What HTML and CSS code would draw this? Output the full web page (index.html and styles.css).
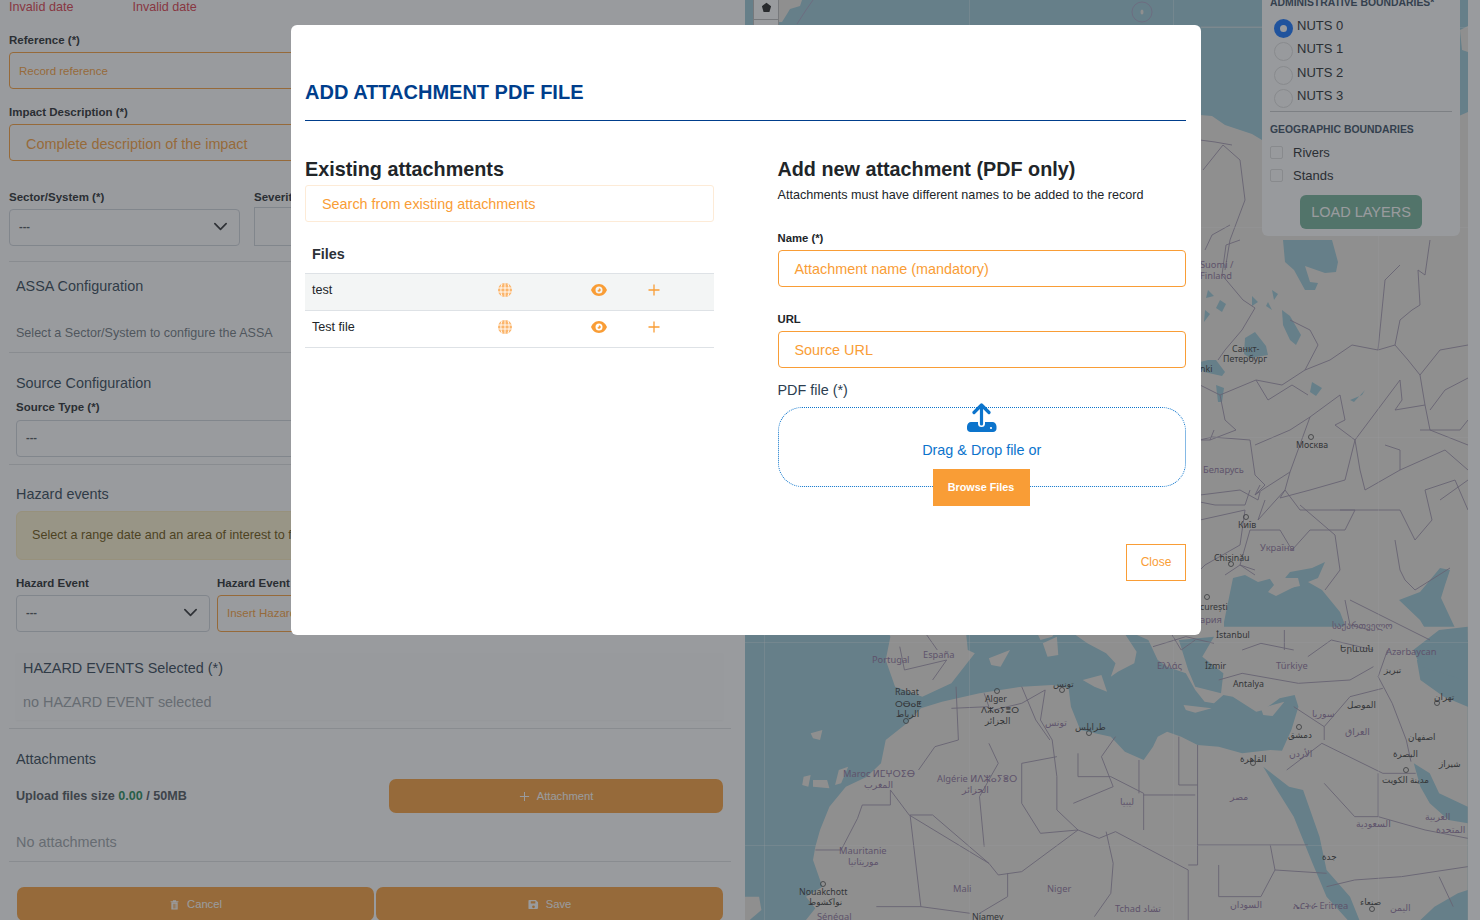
FILE: index.html
```html
<!DOCTYPE html>
<html lang="en">
<head>
<meta charset="utf-8">
<title>Add attachment</title>
<link rel="stylesheet" href="styles.css">
</head>
<body>
<div class="page">
  <main class="form">
    <div class="dates"><span class="invalid">Invalid date</span><span class="invalid">Invalid date</span></div>
    <label class="lbl lbl-ref">Reference (*)</label>
    <div class="inp inp-orange ph-small">Record reference</div>
    <label class="lbl lbl-imp">Impact Description (*)</label>
    <div class="inp inp-orange ph-large">Complete description of the impact</div>
    <div class="sector-row">
      <div class="sector-col">
        <label class="lbl">Sector/System (*)</label>
        <div class="inp inp-gray sel">--- <svg class="chev" viewBox="0 0 16 16"><path d="M2 5l6 6 6-6" fill="none" stroke="#2b2d30" stroke-width="1.8" stroke-linecap="round" stroke-linejoin="round"/></svg></div>
      </div>
      <div class="sev-col">
        <label class="lbl">Severity (*)</label>
        <div class="inp inp-plain"></div>
      </div>
    </div>
    <hr class="rule rule-a">
    <div class="section">
      <h3 class="sec-title st-assa">ASSA Configuration</h3>
      <p class="muted-line">Select a Sector/System to configure the ASSA</p>
    </div>
    <hr class="rule rule-b">
    <div class="section">
      <h3 class="sec-title st-source">Source Configuration</h3>
      <label class="lbl lbl-src">Source Type (*)</label>
      <div class="inp inp-gray sel src-sel">---</div>
    </div>
    <hr class="rule rule-c">
    <div class="section">
      <h3 class="sec-title st-haz">Hazard events</h3>
      <div class="alert">Select a range date and an area of interest to filter hazard events</div>
      <div class="haz-row">
        <div class="haz-a"><label class="lbl">Hazard Event</label>
          <div class="inp inp-gray sel">--- <svg class="chev" viewBox="0 0 16 16"><path d="M2 5l6 6 6-6" fill="none" stroke="#2b2d30" stroke-width="1.8" stroke-linecap="round" stroke-linejoin="round"/></svg></div></div>
        <div class="haz-b"><label class="lbl">Hazard Event Name</label>
          <div class="inp inp-orange ph-small ph-haz">Insert Hazard Event</div></div>
      </div>
      <div class="haz-card">
        <div class="haz-card-title">HAZARD EVENTS Selected (*)</div>
        <div class="haz-card-none">no HAZARD EVENT selected</div>
      </div>
    </div>
    <hr class="rule rule-d">
    <div class="section">
      <h3 class="sec-title st-att">Attachments</h3>
      <div class="att-row">
        <div class="upload">Upload files size <span class="ok">0.00</span> / 50MB</div>
        <div class="btn btn-att"><svg class="bi" viewBox="0 0 12 12"><path d="M6 1v10M1 6h10" stroke="currentColor" stroke-width="1.1" fill="none"/></svg>Attachment</div>
      </div>
      <p class="none-att">No attachments</p>
    </div>
    <hr class="rule rule-e">
    <div class="actions">
      <div class="btn btn-cancel"><svg class="bi" viewBox="0 0 12 14"><path d="M1 3h10v1H1zM4 1.500h4V3H4zM2 4.500h8V13.500H2z M4 6v6h.8V6zM5.700 6v6h.8V6zM7.400 6v6h.8V6z" fill="currentColor" fill-rule="evenodd"/></svg>Cancel</div>
      <div class="btn btn-save"><svg class="bi" viewBox="0 0 12 12"><path d="M1.500 1h7L11 3.500v6A1.500 1.500 0 0 1 9.500 11h-8A1 1 0 0 1 .5 10V2a1 1 0 0 1 1-1zM3 2.500v2.500h5V2.500zM6 7a1.500 1.500 0 1 0 0 3 1.500 1.500 0 0 0 0-3z" fill="currentColor" fill-rule="evenodd"/></svg>Save</div>
    </div>
  </main>

  <section class="map">
    <svg class="map-svg" viewBox="0 0 723 920">
      <rect width="723" height="920" fill="#98c6d4"/>
      <!-- northern land -->
      <g transform="translate(-745 0)">
        <path fill="#ebe7e0" d="M1200 115 L1212 116 L1225 125 L1252 134 L1262 140 L1290 142 L1320 128 L1336 118 L1352 140 L1362 165 L1385 175 L1400 150 L1420 128 L1445 122 L1468 112 L1468 660 L1200 660Z"/>
        <path fill="#ebe7e0" d="M778 0H802L800 6L790 9L787 14L782 22H778Z"/>
        <path fill="#ebe7e0" d="M1460 30L1468 26V52L1462 50Z"/>
        <ellipse cx="1142" cy="12" rx="1.500" ry="2.500" fill="#ebe7e0"/>
        <circle cx="1142" cy="12" r="10" fill="none" stroke="#a6a3c4" stroke-width="1"/>
        <path d="M813 0L806 10L797 24" fill="none" stroke="#a6a3c4" stroke-width="1"/>
        <path d="M1201 27H1262" stroke="#cfd8da" stroke-width=".8"/>
        <!-- lakes and inland water, Russia -->
        <g fill="#98c6d4">
          <path d="M1283 240L1332 240L1338 262L1336 272L1325 273L1305 266L1310 282L1318 283L1315 290L1305 290L1294 270L1285 262Z"/>
          <path d="M1245 338L1255 332L1266 346L1268 355L1250 358L1244 354Z"/>
          <path d="M1282 310L1290 316L1301 335L1296 345L1290 340L1283 325Z"/>
          <path d="M1208 360L1216 360L1225 372L1222 376L1204 372L1200 368L1200 362Z"/>
          <path d="M1216 385L1224 388L1222 402L1218 402Z"/>
          <path d="M1312 382L1322 388L1316 396L1310 392Z"/>
          <path d="M1220 300L1226 304L1222 312L1216 308ZM1205 310L1210 314L1204 322ZM1208 290L1214 296L1206 298ZM1272 290L1278 294L1274 300ZM1268 302L1272 310L1266 306ZM1252 296L1258 302L1252 306Z"/>
          <path d="M1350 400L1362 395L1365 390L1354 402Z"/>
        </g>
        <!-- Black sea + Azov -->
        <path fill="#98c6d4" d="M1224 660 L1224 622 L1233 578 L1245 575 L1258 582 L1273 578 L1280 590 L1300 586 L1298 578 L1285 578 L1290 572 L1312 568 L1325 562 L1318 578 L1308 582 L1322 590 L1340 612 L1345 625 L1328 640 L1290 642 L1265 655 L1262 660Z"/>
        <path fill="#ebe7e0" d="M1268 576 L1278 572 L1296 586 L1276 596 L1268 592 L1274 585Z"/>
        <!-- Caspian -->
        <path fill="#98c6d4" d="M1399 600 L1420 592 L1440 568 L1450 570 L1445 585 L1441 598 L1456 630 L1468 650 L1468 660 L1440 660 L1432 640 L1420 620Z"/>
        <path fill="#98c6d4" d="M1450 648L1468 632V660H1450Z"/>
      </g>
      <!-- south basemap, coordinates follow a 2.133×3 projection -->
      <g transform="translate(0 630) scale(.469 .3333)">
        <path fill="#ebe7e0" d="M300 -10 H1541 V30 L1490 40 L1430 70 L1440 150 L1490 200 L1541 230 L1541 870 H130 L150 835 L130 800 L165 770 L145 690 L150 650 L160 600 L180 530 L215 470 L260 440 L290 400 L300 330 L345 280 L375 235 L420 215 L500 190 L590 170 L655 165 L690 175 L695 230 L715 300 L780 320 L810 365 L850 390 L870 350 L880 320 L900 305 L930 320 L965 345 L1010 350 L1060 370 L1120 360 L1145 362 L1165 300 L1180 230 L1172 195 L1140 205 L1105 240 L1090 245 L1040 200 L1020 195 L1000 220 L980 215 L960 180 L940 130 L900 110 L880 90 L860 30 L820 5 L790 -10 Z"/>
        <path fill="#ebe7e0" d="M300 -10 H470 L475 60 L490 70 L440 160 L378 200 L320 170 L300 90 L310 20Z"/>
        <path fill="#ebe7e0" d="M560 -10 H800 L835 65 L830 100 L795 125 L780 140 L790 100 L770 70 L730 40 L680 -10 Z"/>
        <g fill="#98c6d4">
          <path d="M925 30L1000 20L975 80L1020 130L1015 190L960 170L945 120Z"/>
          <path d="M1160 470L1190 480L1225 620L1240 720L1290 800L1310 870H1285L1240 800L1210 700L1170 560L1130 470L1105 410Z"/>
          <path d="M1426 400L1460 430L1480 490L1541 530V580L1500 570L1460 520L1440 470Z"/>
          <path d="M1480 0L1541 -10V90L1530 150L1490 130L1440 110L1425 60Z"/>
          <path d="M1520 790L1541 780V870H1440L1470 830Z"/>
        </g>
        <g fill="#ebe7e0">
          <path d="M635 40L665 20L668 75L645 80Z"/>
          <path d="M620 0H665L655 20L630 30Z"/>
          <path d="M720 150L760 135L772 185L745 170Z"/>
          <path d="M1100 235L1150 215L1125 258L1105 255Z"/>
          <path d="M935 225L995 235L960 248L940 240Z"/>
          <path d="M520 85L565 60L545 110L525 105Z"/>
          <path d="M0 800H30L35 840L10 870H0Z"/>
          <path d="M140 310L165 300L160 330L145 325Z"/>
          <path d="M125 440L140 435L135 470L122 465Z"/>
          <path d="M145 450L175 450L180 475L145 470Z"/>
          <path d="M200 420L220 410L205 460L192 465Z"/>
        </g>
        <!-- boundaries -->
        <g class="bd" fill="none" stroke="#9b8fa8">
          <path d="M310 480L350 555L350 555L520 700L540 735L590 725L710 600L755 625L790 605L945 720L945 870"/>
          <path d="M310 480V525H250L240 565L205 660H150"/>
          <path d="M352 555H400L520 700M352 555L375 830H280"/>
          <path d="M655 330L665 440L665 540L710 600M655 330L630 270L640 180"/>
          <path d="M965 345V705H945M965 645H1200"/>
          <path d="M770 605L785 700L780 790L745 860M560 730V800L500 850M375 830L480 850"/>
          <path d="M1155 420L1230 340L1360 430L1430 430M1170 230L1235 290L1235 330M1235 290L1290 200L1360 175"/>
          <path d="M1370 60L1350 140L1380 220L1410 330L1420 395"/>
          <path d="M1010 150L1060 130L1180 160L1290 150L1340 110M1060 60L1100 40L1170 60M870 50L940 20L1000 40"/>
          <path d="M450 170L455 330L405 350L370 420M590 170L620 270L650 330M520 340L540 400L500 500L510 650M590 400L665 380M590 400L590 520L630 610L710 600"/>
          <path d="M710 370V440L780 440L850 490V600M850 495H960M790 320L760 380L785 470L700 520M840 390V490M925 320V465H965"/>
          <path d="M1120 645L1130 720L1240 730M1010 705V800H1100L1130 720M1541 710L1400 740L1300 750L1240 770M1480 740L1510 830"/>
          <path d="M1350 430L1350 560M1235 460L1300 560L1350 560L1450 600L1541 625"/>
          <path d="M330 50L340 120L430 90L400 150M380 0L410 60M900 -10L930 60L960 30M1150 0L1150 60M1200 80L1250 30L1340 60"/>
          <path d="M510 190L520 230L440 235M640 180L590 220L530 240"/>
        </g>
      </g>
      <g transform="translate(-745 0)" fill="none" stroke="#9b8fa8" stroke-width=".9">
        <path d="M1222 275L1243 300L1255 308L1242 330L1225 350L1218 360M1222 275L1226 245L1240 240"/>
        <path d="M1200 385L1220 395L1225 420L1236 430L1210 440L1200 440"/>
        <path d="M1220 395L1256 380L1282 385L1305 370L1318 345L1310 330L1290 320"/>
        <path d="M1256 380L1268 400L1292 385L1308 395M1305 370L1330 360L1352 345L1378 350L1395 345L1408 360L1420 375L1425 405"/>
        <path d="M1395 345L1400 320L1412 310L1420 305L1418 270L1425 275L1430 240M1378 350L1385 280L1400 265"/>
        <path d="M1420 375L1440 350L1468 345M1430 410L1445 390L1468 378"/>
        <path d="M1255 445L1290 430L1310 417L1340 395L1345 420L1335 425L1355 440L1400 380L1402 400L1395 410"/>
        <path d="M1200 440L1212 437L1250 440L1255 475L1265 485L1255 495L1262 490L1290 472L1310 417M1290 472L1285 490L1280 498L1310 490L1345 480L1355 440L1360 470L1365 490L1400 470L1400 450L1385 445"/>
        <path d="M1210 440L1214 430M1255 495L1260 485M1265 500L1258 520L1285 490L1300 510L1340 510L1355 510L1345 530L1310 530L1292 550L1280 530L1250 530"/>
        <path d="M1200 495L1240 490L1258 500L1260 492M1200 502L1215 505L1245 505L1250 490M1200 520L1245 510L1240 545L1205 565L1200 570M1300 505L1335 535L1340 570L1325 590"/>
        <path d="M1340 510L1400 510L1410 530L1415 540L1432 520L1425 490L1455 480L1468 510M1400 470L1445 450L1468 470M1420 430L1460 430L1468 420"/>
        <path d="M1395 410L1425 405L1430 430L1468 445M1468 480L1440 500"/>
        <path d="M1395 540L1400 570L1405 580L1415 590L1450 568M1350 600L1400 625L1430 640M1345 600L1350 625L1370 630M1225 575L1240 565L1255 570M1250 530L1240 565L1255 575"/>
        <path d="M1205 250L1212 235L1230 225M1203 170L1223 145L1240 160L1245 200L1230 240L1225 270M1200 140L1215 142L1232 145"/>
      </g>
      <!-- graticule -->
      <g stroke="#fff" stroke-opacity=".28" stroke-width="1">
        <path d="M19.500 0V920M224.500 0V920M428.500 0V920M633.500 0V920M0 27.500H723M0 227.500H723M0 437.500H723M0 642.500H723M0 845.500H723"/>
      </g>
      <!-- labels -->
      <g class="ml" transform="translate(-745 0)">
        <text x="1200" y="268" class="mc">Suomi /</text><text x="1200" y="279" class="mc">Finland</text>
        <text x="1232" y="352" class="md">Санкт-</text><text x="1223" y="362" class="md">Петербург</text>
        <text x="1200" y="372" class="md">nki</text>
        <text x="1296" y="448" class="md">Москва</text>
        <text x="1203" y="473" class="mc">Беларусь</text>
        <text x="1238" y="528" class="md">Київ</text>
        <text x="1260" y="551" class="mc">Україна</text>
        <text x="1214" y="561" class="md">Chișinău</text>
        <text x="1200" y="610" class="md">curești</text>
        <text x="1200" y="623" class="mc">ария</text>
        <text x="1216" y="638" class="md">İstanbul</text>
        <text x="1332" y="629" class="mc">საქართველო</text>
        <text x="872" y="663" class="mc">Portugal</text><text x="923" y="658" class="mc">España</text>
        <text x="895" y="695" class="md">Rabat</text><text x="895" y="707" class="md">ⵔⴱⴰⵟ</text><text x="896" y="717" class="md">الرباط</text>
        <text x="985" y="702" class="md">Alger</text><text x="981" y="713" class="md">ⴷⵣⴰⵢⴻⵔ</text><text x="985" y="724" class="md">الجزائر</text>
        <text x="1053" y="687" class="md">تونس</text><text x="1045" y="726" class="mc">تونس</text><text x="1075" y="730" class="md">طرابلس</text>
        <text x="1157" y="669" class="mc">Ελλάς</text><text x="1205" y="669" class="md">İzmir</text>
        <text x="1276" y="669" class="mc">Türkiye</text><text x="1233" y="687" class="md">Antalya</text>
        <text x="1340" y="652" class="md">Երևան</text><text x="1386" y="655" class="mc">Azərbaycan</text><text x="1384" y="673" class="md">تبریز</text>
        <text x="1347" y="708" class="md">الموصل</text><text x="1312" y="717" class="mc">سوريا</text><text x="1434" y="700" class="md">تهران</text>
        <text x="1345" y="735" class="mc">العراق</text><text x="1408" y="740" class="md">اصفهان</text><text x="1288" y="738" class="md">دمشق</text>
        <text x="1289" y="757" class="mc">الأردن</text><text x="1240" y="762" class="md">القاهرة</text><text x="1393" y="757" class="md">البصرة</text><text x="1439" y="767" class="md">شيراز</text>
        <text x="843" y="777" class="mc">Maroc ⵍⵎⵖⵔⵉⴱ</text><text x="864" y="788" class="mc">المغرب</text>
        <text x="937" y="782" class="mc">Algérie ⵍⴷⵣⴰⵢⴻⵔ</text><text x="962" y="793" class="mc">الجزائر</text>
        <text x="1120" y="805" class="mc">ليبيا</text><text x="1230" y="800" class="mc">مصر</text><text x="1382" y="783" class="md">مدينة الكويت</text>
        <text x="1356" y="827" class="mc">السعودية</text><text x="1425" y="820" class="mc">العربية</text><text x="1436" y="833" class="mc">المتحدة</text>
        <text x="839" y="854" class="mc">Mauritanie</text><text x="848" y="865" class="mc">موريتانيا</text>
        <text x="1322" y="860" class="md">جدة</text>
        <text x="799" y="895" class="md">Nouakchott</text><text x="808" y="905" class="md">نواكشوط</text>
        <text x="953" y="892" class="mc">Mali</text><text x="1047" y="892" class="mc">Niger</text>
        <text x="1115" y="912" class="mc">Tchad تشاد</text><text x="1230" y="908" class="mc">السودان</text>
        <text x="1293" y="909" class="mc">ኤርትራ Eritrea</text><text x="1360" y="905" class="md">صنعاء</text><text x="1390" y="911" class="mc">اليمن</text>
        <text x="817" y="920" class="mc">Sénégal</text><text x="972" y="920" class="md">Niamey</text>
      </g>
      <g fill="none" stroke="#3f3f3f" stroke-width=".8" transform="translate(-745 0)">
        <circle cx="1311" cy="437" r="2.500"/><circle cx="1246" cy="517" r="2.500"/><circle cx="1231" cy="564" r="2.500"/><circle cx="1207" cy="597" r="2.500"/>
        <circle cx="906" cy="721" r="2.500"/><circle cx="997" cy="691" r="2.500"/><circle cx="1062" cy="690" r="2.500"/><circle cx="1089" cy="733" r="2.500"/><circle cx="1253" cy="763" r="2.500"/><circle cx="1299" cy="727" r="2.500"/><circle cx="1406" cy="770" r="2.500"/><circle cx="1437" cy="703" r="2.500"/><circle cx="823" cy="884" r="2.500"/><circle cx="1372" cy="909" r="2.500"/>
      </g>
    </svg>
    <div class="tool">
      <div class="tool-btn"><svg class="tool-ico" viewBox="0 0 12 12"><path d="M6 .8L11 4.500 9.200 10.800H2.800L1 4.500Z" fill="#1d1d1d"/></svg></div>
      <div class="tool-btn"></div>
    </div>
    <aside class="layers">
      <div class="lay-h lay-admin">ADMINISTRATIVE BOUNDARIES*</div>
      <div class="radio-row"><span class="radio on"></span>NUTS 0</div>
      <div class="radio-row"><span class="radio"></span>NUTS 1</div>
      <div class="radio-row"><span class="radio"></span>NUTS 2</div>
      <div class="radio-row"><span class="radio"></span>NUTS 3</div>
      <hr class="lay-rule">
      <div class="lay-h">GEOGRAPHIC BOUNDARIES</div>
      <div class="check-row"><span class="check"></span>Rivers</div>
      <div class="check-row"><span class="check"></span>Stands</div>
      <div class="load">LOAD LAYERS</div>
    </aside>
  </section>
  <div class="gutter"></div>
</div>

<div class="backdrop"></div>
<div class="modal">
  <h2 class="modal-title">ADD ATTACHMENT PDF FILE</h2>
  <div class="modal-cols">
    <div class="col-l">
      <h3 class="col-h">Existing attachments</h3>
      <div class="search">Search from existing attachments</div>
      <div class="files-h">Files</div>
      <div class="file-row striped">
        <span class="fname">test</span>
        <svg class="ic ic-globe" viewBox="0 0 14 14"><use href="#globe"/></svg>
        <svg class="ic ic-eye" viewBox="0 0 16 12"><use href="#eye"/></svg>
        <svg class="ic ic-plus" viewBox="0 0 12 12"><use href="#plus"/></svg>
      </div>
      <div class="file-row">
        <span class="fname">Test file</span>
        <svg class="ic ic-globe" viewBox="0 0 14 14"><use href="#globe"/></svg>
        <svg class="ic ic-eye" viewBox="0 0 16 12"><use href="#eye"/></svg>
        <svg class="ic ic-plus" viewBox="0 0 12 12"><use href="#plus"/></svg>
      </div>
    </div>
    <div class="col-r">
      <h3 class="col-h">Add new attachment (PDF only)</h3>
      <p class="col-sub">Attachments must have different names to be added to the record</p>
      <label class="mlbl mlbl-name">Name (*)</label>
      <div class="minp">Attachment name (mandatory)</div>
      <label class="mlbl mlbl-url">URL</label>
      <div class="minp">Source URL</div>
      <div class="pdf-lbl">PDF file (*)</div>
      <div class="drop">
        <svg class="up" viewBox="0 0 30 30"><path d="M14.500 2L7 9.500M14.500 2L22 9.500M14.500 2V21" fill="none" stroke="#0c74cc" stroke-width="3.200" stroke-linecap="round" stroke-linejoin="round"/><path d="M11 19H4C2 19 0 21 0 23.500V25.500C0 27.500 1.500 29 3.500 29H26C28 29 29.500 27.500 29.500 25.500V23.500C29.500 21 27.500 19 25.500 19H18V20.500A3.500 3.500 0 0 1 11 20.500Z" fill="#0c74cc"/><circle cx="24" cy="25" r="1.100" fill="#fff"/></svg>
        <div class="drop-t">Drag &amp; Drop file or</div>
        <div class="browse">Browse Files</div>
      </div>
      <div class="close-row"><div class="close">Close</div></div>
    </div>
  </div>
</div>

<svg class="defs" width="0" height="0" aria-hidden="true">
  <defs>
    <g id="globe"><circle cx="7" cy="7" r="7" fill="#fbb56b"/><path d="M7 0V14M0 5H14M0 9H14M4 1C2.500 4 2.500 10 4 13M10 1C11.500 4 11.500 10 10 13" stroke="#fff" stroke-width=".9" fill="none"/></g>
    <g id="eye"><path d="M8 0C4 0 1.200 3 0 6c1.200 3 4 6 8 6s6.800-3 8-6c-1.200-3-4-6-8-6zm0 2.500a3.500 3.500 0 1 1 0 7 3.500 3.500 0 0 1 0-7z" fill="#f99d36" fill-rule="evenodd"/><path d="M8 4.200a1.800 1.800 0 1 1-1.700 2.400C7.200 6.600 7.900 5.500 8 4.200z" fill="#f99d36"/></g>
    <g id="plus"><path d="M6 .5V11.500M.5 6H11.500" stroke="#f99d36" stroke-width="1.300" fill="none"/></g>
  </defs>
</svg>
</body>
</html>
```
FILE: styles.css
```css
* { box-sizing: border-box; }
html, body { margin: 0; height: 100%; overflow: hidden; }
body { font-family: "Liberation Sans", Arial, sans-serif; color: #212529; background: #fff; }
.page { display: flex; width: 1480px; height: 920px; overflow: hidden; }

.form { width: 745px; flex: none; padding: 0 14px 0 9px; overflow: hidden; background: #fff; }
.dates { display: flex; gap: 59px; height: 15px; font-size: 12.6px; line-height: 15px; }
.invalid { color: #dc3545; }
.lbl { display: block; font-size: 11.5px; line-height: 13px; font-weight: 700; color: #212529; white-space: nowrap; }
.lbl-ref { margin-top: 19px; }
.lbl-imp { margin-top: 17px; }
.inp { display: flex; align-items: center; height: 37px; margin-top: 5px; border: 1px solid #ced4da; border-radius: 4px; background: #fff; font-size: 11px; }
.inp-orange { border-color: #f99d36; color: #f99d36; padding-left: 9px; }
.inp-gray { color: #495057; padding: 0 11px 4px 9px; justify-content: space-between; font-weight: 700; }
.inp-plain { border-radius: 0; height: 39px; margin-top: 3px; }
.ph-small { font-size: 11.5px; }
.ph-large { font-size: 14.4px; padding-left: 16px; padding-top: 2px; }
.ph-haz { padding-left: 9px; padding-bottom: 2px; white-space: nowrap; }
.chev { width: 15px; height: 15px; margin-top: 2px; }
.sector-row { display: flex; gap: 14px; margin-top: 30px; }
.sector-col { width: 231px; }
.sev-col { flex: 1; }
.rule { border: 0; border-top: 1px solid #dfe1e3; margin: 0; }
.rule-a { margin-top: 15px; }
.section { padding: 0 8px 0 7px; }
.sec-title { margin: 0; font-size: 14.4px; line-height: 17px; font-weight: 400; color: #2c3e50; }
.st-assa { margin-top: 16px; }
.muted-line { margin: 31px 0 0; font-size: 12.55px; line-height: 15px; color: #6c757d; }
.rule-b { margin-top: 11px; }
.st-source { margin-top: 22px; }
.lbl-src { margin-top: 9px; }
.src-sel { margin-top: 6px; height: 37px; }
.rule-c { margin-top: 7px; }
.st-haz { margin-top: 21px; }
.alert { margin-top: 8px; height: 49px; display: flex; align-items: center; padding: 0 0 2px 15px; background: #fdf2ce; border: 1px solid #faeaba; border-radius: 6px; font-size: 12.6px; color: #664d03; white-space: nowrap; overflow: hidden; }
.haz-row { display: flex; gap: 7px; margin-top: 17px; }
.haz-a { width: 194px; }
.haz-b { flex: 1; }
.haz-card { margin-top: 21px; height: 67px; padding: 7px; background: #fdfdfd; box-shadow: 0 1px 2px rgba(0,0,0,.04); }
.haz-card-title { font-size: 14.4px; line-height: 17px; color: #2c3e50; }
.haz-card-none { margin-top: 17px; font-size: 14.4px; line-height: 17px; color: #99a0a6; }
.rule-d { margin-top: 8px; }
.st-att { margin-top: 22px; }
.att-row { display: flex; align-items: center; justify-content: space-between; margin-top: 11px; }
.upload { font-size: 12.6px; font-weight: 700; color: #495057; }
.ok { color: #198754; }
.btn { display: flex; align-items: center; justify-content: center; gap: 7px; background: #f99d36; color: #fff; font-size: 11.2px; }
.btn-att { width: 334px; height: 34px; border-radius: 7px; }
.bi { width: 11px; height: 11px; }
.none-att { margin: 21px 0 0; font-size: 14.4px; line-height: 17px; color: #99a0a6; }
.rule-e { margin-top: 10px; }
.actions { display: flex; gap: 2px; padding-left: 8px; margin-top: 25px; }
.btn-cancel { width: 357px; height: 34px; border-radius: 7px; }
.btn-save { width: 347px; height: 34px; border-radius: 7px; }

.map { position: relative; width: 723px; flex: none; height: 920px; overflow: hidden; }
.map-svg { display: block; width: 723px; height: 920px; }
.bd path { vector-effect: non-scaling-stroke; stroke-width: .9px; }
.ml text { font-family: "Noto Sans", "DejaVu Sans", sans-serif; }
.ml .mc { fill: #8a6f99; font-size: 9.3px; }
.ml .md { fill: #333; font-size: 8.8px; }
.gutter { flex: 1; background: #fff; }
.tool { position: absolute; left: 8px; top: -1px; width: 26px; background: #fff; border: 1px solid #bbb; }
.tool-btn { display: flex; align-items: flex-start; justify-content: center; height: 20px; border-bottom: 1px solid #bbb; }
.tool-ico { width: 11px; height: 11px; margin-top: 2px; }

.layers { position: absolute; left: 517px; top: -8px; width: 198px; height: 244px; padding: 8px 8px 0; background: #fcfcfc; border-radius: 0 0 6px 6px; }
.lay-h { font-size: 10.4px; line-height: 13px; font-weight: 700; color: #34495e; }
.lay-admin { margin-top: -4px; margin-bottom: 9px; white-space: nowrap; }
.radio-row { display: flex; align-items: flex-start; height: 23.4px; font-size: 13px; line-height: 15px; color: #212529; padding-left: 4px; }
.radio { width: 19px; height: 19px; margin-right: 4px; border: 1px solid #dcdcdc; border-radius: 50%; margin-top: 1px; }
.radio.on { border: 6.5px solid #0d6efd; background: #fff; }
.lay-rule { border: 0; border-top: 1px solid #c6c8ca; margin: -1px 0 11px; }
.check-row { display: flex; align-items: center; height: 23px; font-size: 13px; color: #212529; }
.lay-h + .check-row { margin-top: 5px; }
.check { width: 13px; height: 13px; margin-right: 10px; border: 1px solid #dcdcdc; border-radius: 2px; }
.load { display: flex; align-items: center; justify-content: center; width: 122px; height: 34px; margin: 8px 0 0 30px; border-radius: 6px; background: #70b096; color: #fff; font-size: 14.5px; }

.backdrop { position: fixed; inset: 0; background: rgba(52,56,62,.5); }
.modal { position: fixed; left: 291px; top: 25px; width: 910px; height: 610px; padding: 0 15px 0 14px; background: #fff; border-radius: 6px; }
.modal-title { margin: 55px 0 0; font-size: 20px; line-height: 24px; font-weight: 700; color: #003e8c; padding-bottom: 16px; border-bottom: 1px solid #003e8c; }
.modal-cols { display: flex; justify-content: space-between; margin-top: 36px; }
.col-l { width: 409px; }
.col-r { width: 408.5px; }
.col-h { margin: 0; font-size: 19.8px; line-height: 24px; font-weight: 700; color: #212529; }
.col-sub { margin: 7px 0 0; font-size: 12.6px; line-height: 15px; color: #212529; }
.search { display: flex; align-items: center; height: 37px; margin-top: 4px; padding-left: 16px; border: 1px solid #fdebd7; border-radius: 3px; color: #f99d36; font-size: 14.4px; }
.files-h { margin-top: 24px; padding-left: 7px; font-size: 14.4px; line-height: 17px; font-weight: 700; color: #2d3238; padding-bottom: 10px; }
.file-row { position: relative; display: flex; align-items: center; height: 37px; border-top: 1px solid #dee2e6; }
.file-row:last-child { height: 38px; border-bottom: 1px solid #dee2e6; }
.striped { background: #f3f5f5; }
.fname { padding-left: 7px; font-size: 12.6px; margin-top: -5px; color: #212529; }
.ic { position: absolute; top: 50%; }
.ic-globe { left: 193px; width: 14px; height: 14px; margin-top: -9px; }
.ic-eye { left: 286px; width: 16px; height: 12px; margin-top: -8px; }
.ic-plus { left: 343px; width: 12px; height: 12px; margin-top: -8px; }
.mlbl { display: block; font-size: 11.3px; line-height: 13px; font-weight: 700; color: #212529; }
.mlbl-name { margin-top: 29px; }
.mlbl-url { margin-top: 26px; }
.minp { display: flex; align-items: center; height: 37px; margin-top: 5px; padding-left: 16px; border: 1px solid #f99d36; border-radius: 4px; color: #f99d36; font-size: 14.4px; }
.pdf-lbl { margin-top: 14px; font-size: 14.4px; line-height: 17px; color: #2c3e50; }
.drop { position: relative; height: 80px; margin-top: 8px; border: 1px dotted #0c74cc; border-radius: 24px; text-align: center; }
.up { position: absolute; left: 188px; top: -5px; width: 30px; height: 30px; }
.drop-t { padding-top: 34px; font-size: 14.4px; line-height: 17px; color: #0c74cc; }
.browse { position: absolute; left: 154px; top: 61px; display: flex; align-items: center; justify-content: center; width: 97px; height: 37px; padding-bottom: 2px; background: #f99d36; color: #fff; font-size: 10.8px; font-weight: 700; }
.close-row { display: flex; justify-content: flex-end; margin-top: 57px; }
.close { display: flex; align-items: center; justify-content: center; width: 60px; height: 37px; padding-bottom: 2px; border: 1px solid #f99d36; color: #f99d36; font-size: 12px; }
.defs { position: absolute; }
```
